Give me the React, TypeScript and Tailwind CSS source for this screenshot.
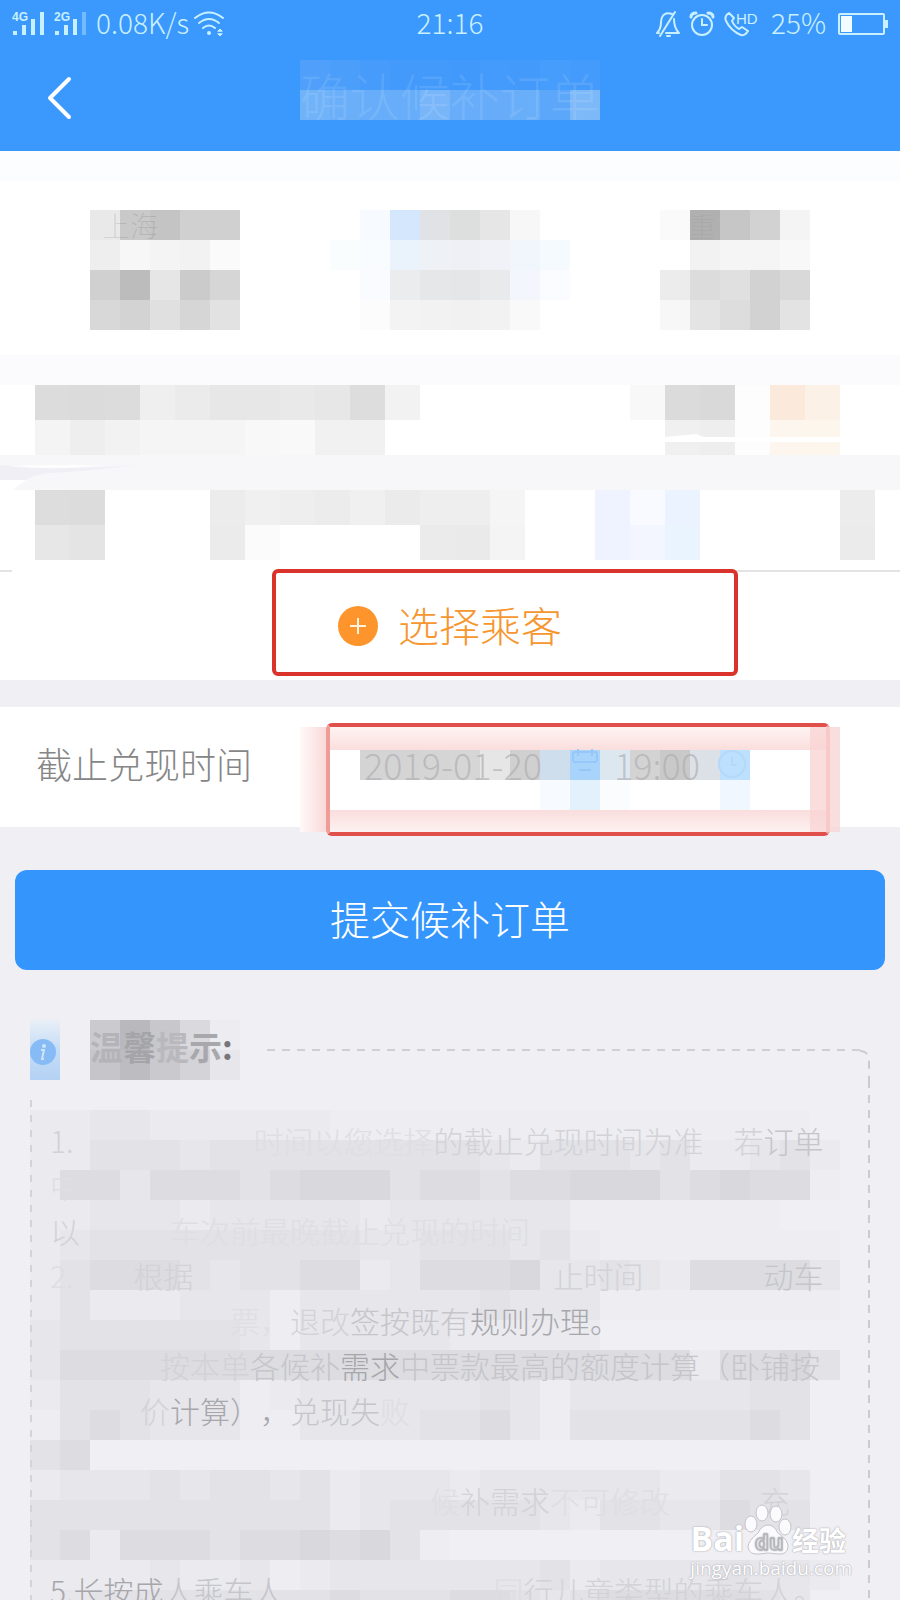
import React, { useState } from 'react';

// one letter = one shade of the tips panel
const SHADES: Record<string, string> = {
    '1': '#ededf2',
    a: '#eaeaef',
    b: '#e6e6eb',
    c: '#e2e2e7',
    d: '#dcdce1',
    e: '#d8d8dd',
};

// two hex digits are a grey, six are a full colour, dots are left empty
const toColor = (token: string) => {
    if (token.startsWith('.')) return null;
    if (token.length === 1) return SHADES[token];
    if (token.length === 2) return `#${token}${token}${token}`;
    return `#${token}`;
};

type MosaicProps = { rows: string[]; cell: number; className?: string };

const Mosaic = ({ rows, cell, className }: MosaicProps) => {
    const grid = rows.map((row) => (row.includes(' ') || row.length === 2 ? row.split(' ') : row.split('')));
    const cols = Math.max(...grid.map((row) => row.length));

    return (
        <svg
            width={cols * cell}
            height={grid.length * cell}
            shapeRendering="crispEdges"
            aria-hidden="true"
            className={`block shrink-0 ${className ?? ''}`}
        >
            {grid.map((row, y) =>
                row.map((token, x) => {
                    const fill = toColor(token);
                    return fill && <rect key={`${x}-${y}`} x={x * cell} y={y * cell} width={cell} height={cell} fill={fill} />;
                })
            )}
        </svg>
    );
};

const TITLE = [
    '4f9ffb 4c9efb 469bfb 439afb 439afb 419afb 459bfb 439afb 479dfb 459bfb',
    '70b3f9 6baff9 68adf9 68adf9 78b6f9 68adf9 66acf9 68aef9 5da7fa 7db9f8',
];
const FROM_STATION = [
    'e9 c9 c4 d0 d0',
    'ee f7 f4 f2 fa',
    'd0 bc e6 cb d6',
    'd8 d3 e0 d6 e2',
];
const TRAIN = [
    '. f7fbff d5e7fd e0e2e5 dddfdf e6e6e6 f7f7f8 .',
    'f9fdfe f8fcff eaf2fc eef1f6 eef0f6 f0f2f8 f1f6fd f5fafe',
    '. f9fbfe ebecee e6e7e9 e5e6e8 e9eaec f3f7fd fbfcff',
    '. fcfcfd f3 f2 f1f1f2 f2 f9f9fa .',
];
const TO_STATION = [
    'fa b0 c6 d2 f4',
    '. f2 f5 f5 f8',
    'ec dc e0 d2 d9',
    'f7 e4 dd d2 e3',
];
const SEAT = ['dc db dc ef eb e7 e7 e9 e7 dd f2', 'f4 ee f2 f5 f5 f5 f8 f9 f1 f1 .'];
const PRICE = ['f8 db d9 fd fbe9dc fbf1e7', '. f0 ee fd fdf6ee fdf6ed'];
const DATE = [
    'd4 d4 d5 d6 e6 d0 cfdeec a8d3fb dde7f0 d3 c9 dbe1e6 bde0fe',
    '. . . . . . f7faff e3f1fd fafcfe . . . f1f7fe',
];
const TIPS_TITLE = ['cbcbcf b9b9bd c8c8cc dadade ececf1', 'c6c6ca bdbdc1 cacace d3d3d8 e6e6eb'];
const TIPS = [
    'aabbaaaaaa1111111111111111.',
    'aacccbcccccccccbacccbcaabca',
    'addbdddcdeeecddcddeeecdedd1',
    'aabbbabbbbbabbbbbb1111111..',
    'abcccccccccbbcccbca11111111',
    'acdddcbccddabdddebbcbaddddb',
    'acaaabbb1bbbbbbcbbb11111111',
    'bccccccb1bbbbbaaaaa........',
    'bdddddddddddddddddddddaddec',
    'acccbbb1abbbbbbcb1bbbbbbcc.',
    '1cdcbbb11bbbbccdb1ccccccdc.',
    'cd.........................',
    'abbbcbccbcabbbabbbbbbaaccb.',
    'ccccccccccabcccccbaccbbdcc.',
    'cdadddcddedec1.............',
    'aaaabaab1abbbbbbbcabbbbcbba',
    'abccccccccdcccddcbcdddddcb.',
];

const FAINT = 'text-[#dedee3]';
const SOFT = 'text-[#d2d2d7]';
const MID = 'text-[#c5c5ca]';
const CLEAR = 'text-[#a6a6ab]';

const gap = (n: number) => '\u3000'.repeat(n);

// every missing character keeps its full width, so the rest stays in its column
const LINES: [string, string][][] = [
    [['1.', SOFT], [gap(6) + '时间', FAINT], ['以您选择', FAINT], ['的截止兑现时间为准', SOFT], [gap(1) + '若', SOFT], ['订单', MID]],
    [['中', FAINT]],
    [['以', SOFT], [gap(3) + '车次前最晚截止兑现的时间', FAINT]],
    [['2.', FAINT], [gap(2) + '根据', SOFT], [gap(12) + '止时间', SOFT], [gap(4), FAINT], ['动车', MID]],
    [[gap(6) + '票，', FAINT], ['退改', SOFT], ['签按既有', MID], ['规则办理。', CLEAR]],
    [['   ', FAINT], [gap(3) + '按本单', SOFT], ['各候补', MID], ['需求', CLEAR], ['中票款最高的额度计算（卧铺按', MID]],
    [[gap(3) + '价', SOFT], ['计算），', CLEAR], ['兑现失', MID], ['败', FAINT]],
    [],
    [['   ', FAINT], [gap(12) + '候', FAINT], ['补需求', SOFT], ['不可修改', FAINT], [gap(3) + '充', SOFT]],
    [],
    [['5.长按成', CLEAR], ['人乘车人', MID], [gap(7) + '同', FAINT], ['行儿童', SOFT], ['类型的乘车人。', SOFT]],
];

const Signal = ({ label, weak }: { label: string; weak?: boolean }) => (
    <svg width="34" height="26" viewBox="0 0 34 26" fill="currentColor" aria-hidden="true">
        <text x="0" y="10" fontSize="12" fontWeight="700" fontFamily="Liberation Sans, sans-serif">{label}</text>
        <rect x="1" y="20" width="4" height="4" />
        <rect x="10" y="14" width="4" height="10" />
        <rect x="19" y="8" width="4" height="16" />
        <rect x="28" y="1" width="4" height="23" opacity={weak ? 0.4 : 1} />
    </svg>
);

const StatusBar = () => (
    <div className="grid h-12 grid-cols-[1fr_auto_1fr] items-center px-3 text-[28px] leading-none font-light text-[#c9f0ff]">
        <div className="flex items-center">
            <div className="flex gap-2">
                <Signal label="4G" />
                <Signal label="2G" weak />
            </div>
            <span className="ml-2 pb-1">0.08K/s</span>
            <svg width="32" height="28" viewBox="0 0 32 28" fill="none" stroke="currentColor" strokeWidth="2" strokeLinecap="round" className="ml-1" aria-hidden="true">
                <path d="M2 8 Q16 -3 30 8" />
                <path d="M6 13 Q16 5 26 13" />
                <path d="M10 18 Q16 13 22 18" />
                <circle cx="16" cy="23" r="2" fill="currentColor" stroke="none" />
                <path d="M25 21 l2 -2 l2 2z M25 24 l2 2 l2 -2z" fill="currentColor" strokeWidth="1" />
            </svg>
        </div>
        <span className="pb-1">21:16</span>
        <div className="flex items-center justify-end">
            <svg width="26" height="28" viewBox="0 0 26 28" fill="none" stroke="currentColor" strokeWidth="2" strokeLinecap="round" strokeLinejoin="round" aria-hidden="true">
                <path d="M17 4 Q7 1 6 12 Q6 19 2 23 H4 M11 23 H24 Q19 18 19 9 M5 26 L20 2 M12 26 H15" />
            </svg>
            <svg width="26" height="28" viewBox="0 0 26 28" fill="none" stroke="currentColor" strokeWidth="2" strokeLinecap="round" className="ml-2" aria-hidden="true">
                <circle cx="13" cy="15" r="10" />
                <path d="M13 9 V15 H18" />
                <path d="M2 7 Q2 3 7 3 M24 7 Q24 3 19 3" strokeWidth="3" />
            </svg>
            <svg width="36" height="28" viewBox="0 0 36 28" fill="none" stroke="currentColor" strokeWidth="2" strokeLinejoin="round" className="ml-2" aria-hidden="true">
                <path d="M6 3 Q1 6 3 11 Q8 21 18 25 Q22 26 25 21 L19 17 L16 19 Q11 16 9 11 L11 8 Z" />
                <text x="13" y="14" fontSize="15" fill="currentColor" stroke="none" fontFamily="Liberation Sans, sans-serif">HD</text>
            </svg>
            <span className="ml-3 pb-1">25%</span>
            <svg width="50" height="24" viewBox="0 0 50 24" className="ml-3" aria-hidden="true">
                <rect x="1" y="2" width="45" height="20" rx="1" fill="none" stroke="currentColor" strokeWidth="2" />
                <rect x="3" y="4" width="11" height="16" fill="#f2fbff" />
                <rect x="47" y="8" width="3" height="8" fill="currentColor" />
            </svg>
        </div>
    </div>
);

const Header = () => (
    <header className="bg-[#3b98fc]">
        <StatusBar />
        <div className="grid h-[103px] grid-cols-[1fr_auto_1fr] items-start pt-3">
            <button type="button" aria-label="返回" className="ml-9 flex h-[76px] w-12 items-center justify-center text-white">
                <svg width="26" height="44" viewBox="0 0 26 44" fill="none" stroke="currentColor" strokeWidth="4" strokeLinecap="round" strokeLinejoin="round" aria-hidden="true">
                    <path d="M22 3 L3 22 L22 41" />
                </svg>
            </button>
            <div className="grid">
                <Mosaic rows={TITLE} cell={30} className="[grid-area:1/1]" />
                <h1 className="[grid-area:1/1] h-[60px] pt-1 text-[50px] leading-[60px] font-light whitespace-nowrap text-white/10">确认候补订单</h1>
            </div>
        </div>
    </header>
);

const TicketSummary = () => (
    <section className="bg-white">
        <div className="h-[30px] bg-linear-to-b from-[#fdfeff] to-[#fafcff]" />
        <div className="flex justify-between pt-[29px] pr-[90px] pb-[25px] pl-[90px]">
            <div className="grid">
                <Mosaic rows={FROM_STATION} cell={30} className="[grid-area:1/1]" />
                <span className="[grid-area:1/1] pl-3 text-[28px] leading-[30px] font-light text-black/10">上海</span>
            </div>
            <Mosaic rows={TRAIN} cell={30} />
            <div className="grid">
                <Mosaic rows={TO_STATION} cell={30} className="[grid-area:1/1]" />
                <span className="[grid-area:1/1] pl-7 text-[28px] leading-[32px] font-light text-black/5">重</span>
            </div>
        </div>
        <div className="h-[30px] bg-[#fbfbfd]" />
        <div className="flex justify-between pr-[60px] pl-[35px]">
            <Mosaic rows={SEAT} cell={35} />
            <div className="grid">
                <Mosaic rows={PRICE} cell={35} className="[grid-area:1/1]" />
                <svg width="210" height="70" viewBox="0 0 210 70" fill="#ffffff" className="[grid-area:1/1]" aria-hidden="true">
                    <path d="M35 52 L66 49 L74 52 H210 V57 H35Z" />
                </svg>
            </div>
        </div>
        <div className="h-[35px] bg-[#f7f7fa]">
            <svg width="140" height="35" viewBox="0 0 140 35" aria-hidden="true">
                <path d="M0 10 Q60 16 138 10 Q90 16 50 18 Q35 19 26 25 H0Z" fill="#efeff5" />
                <path d="M8 11 Q60 16 100 10 Q60 9 8 11Z" fill="#fdfdfe" />
                <path d="M0 25 H26 Q20 29 13 35 H0Z" fill="#ffffff" />
            </svg>
        </div>
        <div className="flex pr-[25px] pb-[10px] pl-[35px]">
            <Mosaic rows={['dd dc', 'e7 e4']} cell={35} />
            <Mosaic rows={['ec f0 ee ec f0 eb ee ee f5', 'eb fb . . . . eb ea f4']} cell={35} className="ml-[105px]" />
            <Mosaic rows={['eef3ff f8faff eaf3ff', 'eef3ff f4f6ff eaf4ff']} cell={35} className="ml-[70px]" />
            <Mosaic rows={['ec', 'eb']} cell={35} className="ml-auto" />
        </div>
    </section>
);

const PassengerPicker = () => (
    <section className="relative bg-white">
        <div className="flex h-[2px] justify-between">
            <div className="w-3 bg-[#e3e3e5]" />
            <div className="w-[164px] bg-[#e3e3e5]" />
        </div>
        <button type="button" className="flex h-[108px] w-full items-center justify-center gap-5 text-[41px] leading-none font-light text-[#f6962f]">
            <svg width="40" height="40" viewBox="0 0 40 40" aria-hidden="true">
                <circle cx="20" cy="20" r="20" fill="#fd952c" />
                <path d="M12 20 H28 M20 12 V28" stroke="#fff3e0" strokeWidth="2" />
            </svg>
            <span className="pb-1">选择乘客</span>
        </button>
        <div className="pointer-events-none absolute inset-y-0 right-[162px] left-[272px] -mt-px mb-1 rounded-md border-4 border-[#d9332b]" />
    </section>
);

const Deadline = () => {
    const [date, setDate] = useState('2019-01-20');
    const [time, setTime] = useState('19:00');

    return (
        <section className="mt-[27px] flex h-[120px] items-start justify-between bg-white pt-4 pr-[70px] pl-9">
            <label htmlFor="deadline-date" className="text-[36px] leading-[80px] font-light text-[#868686]">截止兑现时间</label>
            <div className="relative w-[504px] shrink-0 rounded-md border-4 border-x-[#ee9c98] border-y-[#e04f49] bg-white">
                <div className="h-[23px] bg-linear-to-b from-[#fef3f2] to-[#fadedd]" />
                <div className="grid h-[60px] pl-[30px]">
                    <Mosaic rows={DATE} cell={30} className="[grid-area:1/1]" />
                    <div className="[grid-area:1/1] z-10 flex h-7 items-center pl-1 text-[36px] leading-none font-light text-[#a9a9ad]/60">
                        <input id="deadline-date" value={date} onChange={(e) => setDate(e.target.value)} className="h-9 w-[206px] bg-transparent outline-none" />
                        <svg width="30" height="30" viewBox="0 0 30 30" fill="none" stroke="#95c8f8" strokeWidth="2" aria-hidden="true">
                            <path d="M3 12 V5 Q3 3 6 3 H24 Q27 3 27 5 V12 M8 0 V7 M22 0 V7 M3 13 H27 M9 21 H21" />
                        </svg>
                        <input aria-label="时间" value={time} onChange={(e) => setTime(e.target.value)} className="ml-[14px] h-9 w-24 bg-transparent outline-none" />
                        <svg width="30" height="30" viewBox="0 0 30 30" fill="none" stroke="#b2d9fa" strokeWidth="2" className="ml-2" aria-hidden="true">
                            <circle cx="14" cy="15" r="13" />
                            <path d="M14 8 V16 H19" />
                        </svg>
                    </div>
                </div>
                <div className="h-[22px] bg-linear-to-b from-[#f9dddd] to-[#fdf1f1]" />
                <div className="absolute inset-y-0 -left-[30px] w-[26px] bg-linear-to-l from-[#f9d9d8] to-[#fff9f9]" />
                <div className="absolute inset-y-0 -right-[14px] w-[30px] bg-[#f9d5d4]/80" />
            </div>
        </section>
    );
};

const Tips = () => (
    <section className="mx-[30px] mt-[50px]">
        <div className="flex h-[60px] items-center">
            <div className="flex h-[60px] w-[30px] items-center bg-linear-to-b from-[#e9eff7] via-[#c4dcf6] to-[#b4d2f4] pt-1">
                <svg width="26" height="26" viewBox="0 0 26 26" aria-hidden="true">
                    <circle cx="13" cy="13" r="13" fill="#86bbf5" />
                    <circle cx="14" cy="7" r="2" fill="#cfe4fb" />
                    <path d="M11 11 H14 L12 20 H14" fill="none" stroke="#cfe4fb" strokeWidth="2" />
                </svg>
            </div>
            <div className="ml-[30px] grid w-[150px]">
                <Mosaic rows={TIPS_TITLE} cell={30} className="[grid-area:1/1]" />
                <h2 className="[grid-area:1/1] text-[33px] leading-[52px] font-bold whitespace-nowrap">
                    <span className="text-[#b4b4b8]">温</span>
                    <span className="text-[#a5a5a9]">馨</span>
                    <span className="text-[#b9b9bd]">提</span>
                    <span className="text-[#a8a8ac]">示</span>
                    <span className="text-[#77777b]">:</span>
                </h2>
            </div>
            <div className="ml-[27px] h-[2px] flex-1 bg-[repeating-linear-gradient(90deg,#cfcfd4_0_8px,transparent_8px_15px)]" />
            <svg width="10" height="30" viewBox="0 0 10 30" fill="none" stroke="#cbcbd0" strokeWidth="2" strokeDasharray="8 7" className="self-end" aria-hidden="true">
                <path d="M0 1 Q9 1 9 12 V30" />
            </svg>
        </div>
        <div className="grid">
            <Mosaic rows={TIPS} cell={30} className="mt-[30px] [grid-area:1/1]" />
            <div className="mt-5 w-[2px] justify-self-start [grid-area:1/1] bg-[repeating-linear-gradient(180deg,#d3d3d8_0_7px,transparent_7px_15px)]" />
            <div className="w-[2px] justify-self-end [grid-area:1/1] bg-[repeating-linear-gradient(180deg,#cbcbd0_0_8px,transparent_8px_15px)]" />
            <div className="mt-[38px] ml-5 [grid-area:1/1] text-[30px] leading-[45px] font-light [text-spacing-trim:space-all]">
                {LINES.map((line, i) => (
                    <p key={i} className="h-[45px] whitespace-pre">
                        {line.map(([text, color], j) => (
                            <span key={j} className={color}>{text}</span>
                        ))}
                    </p>
                ))}
            </div>
        </div>
    </section>
);

const Watermark = () => (
    <div className="absolute right-12 bottom-5 text-white [text-shadow:0_0_2px_#aaaab0,0_0_1px_#b4b4ba]">
        <div className="flex items-end leading-none font-bold">
            <span className="font-['Open_Sans',sans-serif] text-[34px] leading-[36px]">Bai</span>
            <svg width="48" height="54" viewBox="0 0 48 54" fill="#fbfbfd" stroke="#c3c3c9" strokeWidth="1" aria-hidden="true">
                <ellipse cx="7" cy="22" rx="6" ry="8" />
                <ellipse cx="18" cy="11" rx="6" ry="8" />
                <ellipse cx="32" cy="12" rx="6" ry="8" />
                <ellipse cx="41" cy="25" rx="6" ry="8" />
                <path d="M24 23 Q30 23 34 31 Q45 39 44 45 Q43 53 34 52 Q24 50 15 52 Q5 53 4 45 Q4 39 14 31 Q18 23 24 23Z" />
                <text x="11" y="48" fontSize="22" fontWeight="700" fontFamily="Open Sans, sans-serif" stroke="#b4b4ba">du</text>
            </svg>
            <span className="text-[27px] leading-[32px]">经验</span>
        </div>
        <p className="font-['Open_Sans',sans-serif] text-[19px] leading-6">jingyan.baidu.com</p>
    </div>
);

const App = () => (
    <main className="relative h-screen overflow-hidden bg-[#efeff4] font-['Noto_Sans_CJK_SC',sans-serif]">
        <Header />
        <TicketSummary />
        <PassengerPicker />
        <Deadline />
        <div className="mt-[43px] px-[15px]">
            <button type="button" className="h-[100px] w-full rounded-xl bg-[#3496fd] pb-1 text-[40px] leading-none font-light text-white">提交候补订单</button>
        </div>
        <Tips />
        <Watermark />
    </main>
);

export default App;
